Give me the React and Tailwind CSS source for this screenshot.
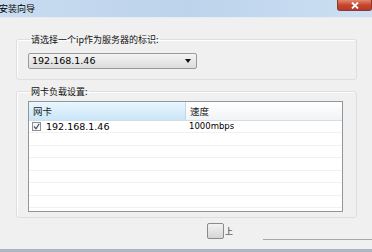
import React from 'react';

const cjk = { fontFamily: '"Noto Sans CJK SC", "Liberation Sans", sans-serif' };
const latin = { fontFamily: 'Tahoma, "DejaVu Sans", "Liberation Sans", "Noto Sans CJK SC", sans-serif' };

const rows = [
  { nic: '192.168.1.46', speed: '1000mbps', checked: true },
  null, null, null, null, null, null,
];

const GroupBox = ({ label, className, children }) => (
  <fieldset className={`border border-[#dcdfe2] rounded-[3px] shadow-[inset_1px_1px_0_#ffffff] ${className}`}>
    <legend className="ml-[2px] px-[1px] text-[9px] leading-[12px] text-[#111]" style={cjk}>
      {label}
    </legend>
    {children}
  </fieldset>
);

export default function App() {
  return (
    <div className="w-[372px] h-[252px] bg-[#f0f0f0] flex flex-col overflow-hidden">
      {/* title bar */}
      <div className="h-[18px] flex items-start justify-between bg-gradient-to-r from-[#c9dcf0] via-[#bcd3eb] to-[#cde0f3] border-b border-[#e4edf6]">
        <span className="mt-[3px] -ml-[1px] text-[9px] leading-[11px] text-black" style={cjk}>安装向导</span>
        <div className="w-[35px] h-[11px] rounded-b-[3px] bg-gradient-to-b from-[#e0856f] via-[#c8452c] to-[#b5392a] border border-t-0 border-[#8a3a30] flex items-center justify-center">
          <svg width="8" height="7" viewBox="0 0 8 7">
            <path d="M1 0.5 L7 6.5 M7 0.5 L1 6.5" stroke="#ffffff" strokeWidth="1.8" />
          </svg>
        </div>
      </div>

      <GroupBox label="请选择一个ip作为服务器的标识:" className="mt-[16px] ml-[16px] w-[341px] h-[46px] pl-[11px] pt-[7px]">
        <div className="w-[169px] h-[16px] border border-[#9a9a9a] rounded-[2px] bg-gradient-to-b from-[#f4f4f4] to-[#dcdcdc] flex items-center justify-between pl-[3px] pr-[5px]">
          <span className="text-[9.5px] leading-[12px] text-black" style={latin}>192.168.1.46</span>
          <svg width="6" height="4" viewBox="0 0 6 4">
            <path d="M0 0 H6 L3 4 Z" fill="#111111" />
          </svg>
        </div>
      </GroupBox>

      <GroupBox label="网卡负载设置:" className="mt-[6px] ml-[16px] w-[341px] h-[133px] pl-[11px] pt-[3px]">
        <div className="w-[315px] h-[111px] border border-[#8f969c] bg-white flex flex-col">
          <div className="h-[19px] flex border-b border-[#d5dee6]">
            <div className="w-[157px] bg-gradient-to-b from-[#eaf6fd] to-[#c9e6f8] border-r border-[#c2d8e8] flex items-center pl-[4px] text-[9.5px] text-[#1a1a1a]" style={cjk}>网卡</div>
            <div className="flex-1 bg-gradient-to-b from-[#ffffff] to-[#f1f3f5] flex items-center pl-[4px] text-[9.5px] text-[#1a1a1a]" style={cjk}>速度</div>
          </div>
          {rows.map((r, i) => (
            <div key={i} className="h-[12.5px] flex border-b border-[#f1f1f1]">
              <div className="w-[157px] flex items-center pl-[3px] gap-[5px]">
                {r && (
                  <>
                    <div className="w-[9px] h-[9px] border border-[#8e8f8f] bg-gradient-to-br from-[#f2f2f2] to-[#ffffff] flex items-center justify-center">
                      <svg width="7" height="7" viewBox="0 0 7 7">
                        <path d="M1 3.5 L3 5.8 L6.2 0.8" stroke="#3c4a6b" strokeWidth="1.2" fill="none" />
                      </svg>
                    </div>
                    <span className="text-[9.5px] leading-[11px] text-black" style={latin}>{r.nic}</span>
                  </>
                )}
              </div>
              <div className="flex-1 flex items-center pl-[3px]">
                {r && <span className="text-[8.5px] leading-[11px] text-black" style={latin}>{r.speed}</span>}
              </div>
            </div>
          ))}
        </div>
      </GroupBox>

      {/* bottom buttons */}
      <div className="flex-1 flex flex-col">
        <div className="mt-[5px] ml-[207px] flex items-center">
          <div className="w-[17px] h-[16px] border border-[#8a8a8a] rounded-[2px] bg-gradient-to-b from-[#f2f2f2] to-[#d6d6d6]" />
          <span className="ml-[1px] text-[8px] leading-[10px] text-[#222]" style={cjk}>上</span>
        </div>
        <div className="mt-auto mb-[9px] ml-[263px] h-px bg-[#a8a8a8]" />
      </div>
      <div className="h-[3px] bg-[#aab7c4]" />
    </div>
  );
}
